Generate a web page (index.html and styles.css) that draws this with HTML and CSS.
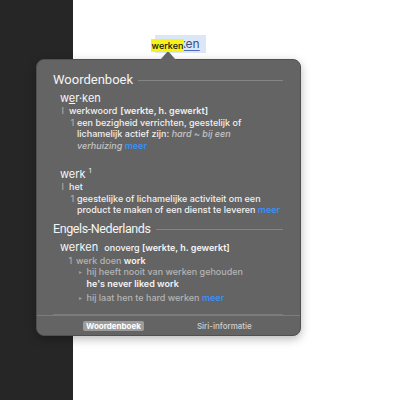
FILE: index.html
```html
<!DOCTYPE html>
<html>
<head>
<meta charset="utf-8">
<link rel="stylesheet" href="styles.css">
</head>
<body>
<div class="sidebar"></div>
<div class="main">
  <span class="word">werken</span>
</div>
<div class="popup">
  <div class="content">
    <div class="head"><span>Woordenboek</span><i class="rule"></i></div>
    <div class="entry">
      <div class="hw">w<u>e</u>r·ken</div>
      <div class="line"><span class="num">I</span>werkwoord <b class="gap">[werkte, h. gewerkt]</b></div>
      <div class="sense"><span class="num">1</span><span>een bezigheid verrichten, geestelijk of<br>lichamelijk actief zijn: <em>hard ~ bij een<br>verhuizing</em> <a class="more">meer</a></span></div>
    </div>
    <div class="entry e2">
      <div class="hw">werk <sup>1</sup></div>
      <div class="line"><span class="num">I</span>het</div>
      <div class="sense"><span class="num">1</span><span>geestelijke of lichamelijke activiteit om een<br>product te maken of een dienst te leveren <a class="more">meer</a></span></div>
    </div>
    <div class="head h2"><span>Engels-Nederlands</span><i class="rule"></i></div>
    <div class="entry e3">
      <div class="hw">werken <span class="pos">onoverg <b>[werkte, h. gewerkt]</b></span></div>
      <div class="sense s3"><span class="num">1</span><span class="grey">werk doen</span>&nbsp;<b class="w">work</b></div>
      <div class="ex"><span class="tri">▸</span><span><span class="grey">hij heeft nooit van werken gehouden</span><br><b class="w">he's never liked work</b></span></div>
      <div class="ex ex2"><span class="tri">▸</span><span><span class="grey">hij laat hen te hard werken</span> <a class="more">meer</a></span></div>
    </div>
    <div class="hr"></div>
  </div>
  <div class="footer">
    <span class="tab active">Woordenboek</span>
    <span class="tab">Siri-informatie</span>
  </div>
</div>
<div class="arrow"></div>
<div class="tag">werken</div>
</body>
</html>
```
FILE: styles.css
```css
html, body {
  margin: 0;
  width: 400px;
  height: 400px;
  overflow: hidden;
}
body {
  display: flex;
  font-family: Inter, "Noto Sans", sans-serif;
  background: #ffffff;
  position: relative;
}
.sidebar {
  width: 73px;
  background: #262626;
}
.main {
  flex: 1;
  padding: 32px 0 0 82px;
}
.word {
  display: inline-block;
  background: #dbe6f7;
  color: #3c4f86;
  font-size: 12px;
  line-height: 18px;
  padding: 0 6px 0 3px;
  text-decoration: underline;
  text-decoration-color: #4a6cc0;
  text-underline-offset: 2px;
}
.popup {
  position: absolute;
  left: 36px;
  top: 59px;
  width: 265px;
  height: 277px;
  box-sizing: border-box;
  background: #646464;
  border: 1px solid #505050;
  border-radius: 8px;
  box-shadow: 0 3px 10px rgba(0,0,0,0.28);
  color: #f0f0f0;
  display: flex;
  flex-direction: column;
}
.content {
  flex: 1;
  padding: 12px 17px 0 16px;
}
.head {
  display: flex;
  align-items: center;
  gap: 5px;
  font-family: Roboto, Inter, sans-serif;
  font-size: 13px;
  line-height: 16px;
  color: #f4f4f4;
}
.rule {
  flex: 1;
  height: 1px;
  background: #858585;
  margin-top: 1px;
}
.entry {
  margin: 4px 0 0 7px;
  font-size: 9px;
  line-height: 11.5px;
  font-weight: 500;
}
.hw {
  font-size: 11px;
  line-height: 13px;
  font-weight: 400;
  color: #f6f6f6;
}
.hw u {
  text-decoration-thickness: 1px;
  text-underline-offset: 1px;
}
.hw sup {
  font-size: 6.5px;
  vertical-align: 5px;
}
.line, .sense, .ex {
  display: flex;
  white-space: nowrap;
}
.num {
  color: #a9a9a9;
  width: 7.5px;
  padding-left: 1.5px;
}
.sense {
  padding-left: 10px;
}
.sense .num {
  width: 6.5px;
  padding-left: 0.5px;
}
b {
  font-weight: 600;
}
.gap {
  margin-left: 3px;
}
em {
  color: #c4c4c4;
}
.more {
  color: #3a8ff5;
  font-weight: 600;
}
.e2 {
  margin-top: 14px;
}
.h2 {
  margin-top: 5px;
  font-size: 12.5px;
  letter-spacing: -0.4px;
}
.e3 {
  margin-top: 4px;
}
.pos {
  font-size: 9px;
  margin-left: 3px;
  font-weight: 500;
}
.s3 {
  margin-top: 1px;
  padding-left: 8px;
}
.s3 .num {
  width: 7.5px;
}
.grey {
  color: #b4b4b4;
}
.w {
  color: #f4f4f4;
}
.ex {
  padding-left: 19px;
}
.tri {
  width: 7.5px;
  color: #a0a0a0;
  font-size: 6px;
}
.ex2 {
  margin-top: 2.5px;
}
.hr {
  margin-top: 11px;
  height: 1px;
  background: #7c7c7c;
}
.footer {
  height: 19px;
  border-top: 1px solid #7c7c7c;
  display: flex;
  align-items: center;
  gap: 50px;
  padding-left: 46px;
  font-size: 8px;
  font-weight: 500;
}
.tab {
  line-height: 10px;
  padding: 0 3px;
  color: #cfcfcf;
}
.tab.active {
  background: #9c9c9c;
  color: #ffffff;
  font-weight: 700;
  border-radius: 2px;
}
.arrow {
  position: absolute;
  left: 160px;
  top: 51px;
  width: 0;
  height: 0;
  border-left: 8px solid transparent;
  border-right: 8px solid transparent;
  border-bottom: 9px solid #646464;
}
.tag {
  position: absolute;
  left: 151px;
  top: 39px;
  width: 33px;
  height: 13px;
  background: #f6f21a;
  color: #111;
  font-size: 9px;
  font-weight: 500;
  line-height: 13px;
  text-align: center;
}
```
